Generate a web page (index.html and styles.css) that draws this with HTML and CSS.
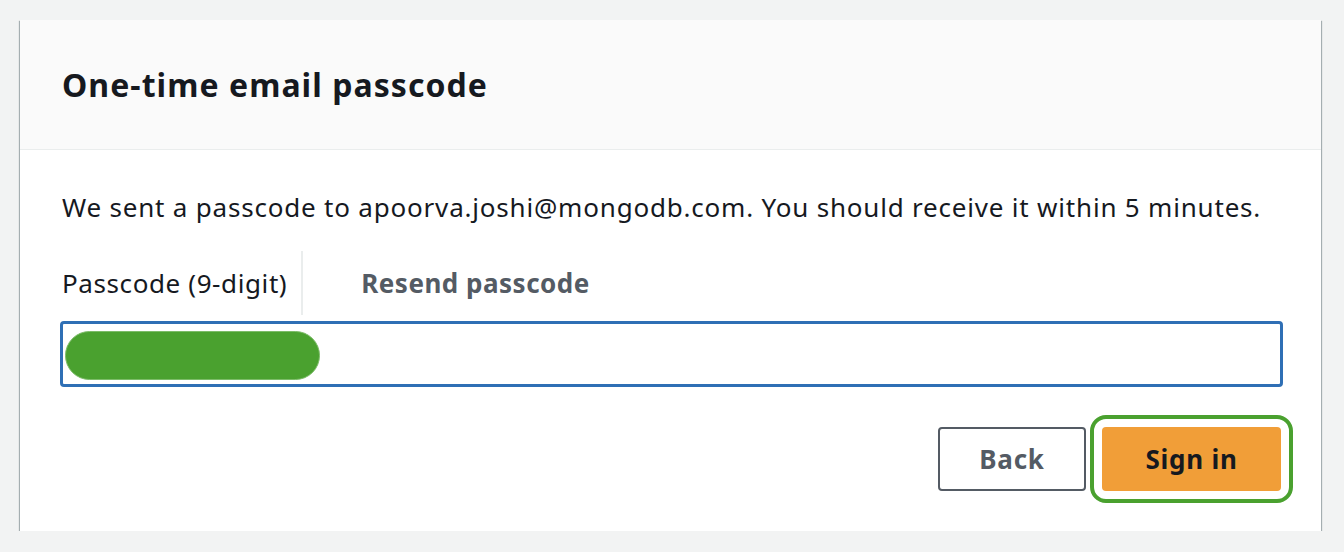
FILE: index.html
```html
<!DOCTYPE html>
<html lang="en">
<head>
<meta charset="utf-8">
<title>One-time email passcode</title>
<link rel="stylesheet" href="styles.css">
</head>
<body>
<div class="card">
  <div class="card-header">
    <h1 class="title">One-time email passcode</h1>
  </div>
  <div class="card-body">
    <p class="intro">We sent a passcode to apoorva.joshi@mongodb.com. You should receive it within 5 minutes.</p>
    <div class="label-row">
      <label class="label" for="code">Passcode (9-digit)</label>
      <span class="divider"></span>
      <a class="resend" href="#">Resend passcode</a>
    </div>
    <div class="input">
      <span class="redact"></span>
    </div>
    <div class="actions">
      <button class="btn btn-back" type="button">Back</button>
      <button class="btn btn-primary" type="button">Sign in</button>
    </div>
  </div>
</div>
</body>
</html>
```

FILE: styles.css
```css
* { box-sizing: border-box; }
html, body { margin: 0; padding: 0; }
body {
  background: #f2f3f3;
  font-family: "Noto Sans", "Open Sans", sans-serif;
  color: #16191f;
  padding: 20px 23px 0 20px;
}
.card {
  background: #ffffff;
  height: 511px;
  box-shadow: 0 1px 1px 0 rgba(0,28,36,0.5), 1px 1px 1px 0 rgba(0,28,36,0.25), -1px 1px 1px 0 rgba(0,28,36,0.25);
}
.card-header {
  background: #fafafa;
  height: 130px;
  border-bottom: 1px solid #eaeded;
  display: flex;
  align-items: center;
  padding-left: 42px;
}
.title {
  margin: 0;
  font-size: 32px;
  letter-spacing: 1.05px;
  font-weight: 700;
  line-height: 40px;
  color: #16191f;
}
.card-body {
  padding: 41px 38px 0 40px;
}
.intro {
  margin: 0 0 0 2px;
  font-size: 26px;
  letter-spacing: 0.8px;
  line-height: 32px;
}
.label-row {
  margin-top: 28px;
  height: 64px;
  display: flex;
  align-items: center;
  padding-left: 2px;
}
.label {
  font-size: 26px;
  letter-spacing: 0.6px;
  line-height: 32px;
}
.divider {
  align-self: stretch;
  width: 2px;
  background: #eaeded;
  margin-left: 14px;
  margin-right: 58px;
}
.resend {
  font-size: 26px;
  letter-spacing: 0.5px;
  font-weight: 700;
  color: #545b64;
  text-decoration: none;
}
.input {
  margin-top: 6px;
  height: 66px;
  border: 3px solid #2f6fb5;
  border-radius: 4px;
  padding: 7px 2px 4px;
  display: flex;
  align-items: stretch;
}
.redact {
  width: 255px;
  background: #4aa12f;
  border: 1px solid #7cbc68;
  border-radius: 25px;
}
.actions {
  margin-top: 40px;
  display: flex;
  justify-content: flex-end;
  gap: 16px;
  padding-right: 2px;
}
.btn {
  height: 64px;
  border-radius: 4px;
  font-family: inherit;
  font-size: 26px;
  letter-spacing: 0.75px;
  font-weight: 700;
  cursor: pointer;
}
.btn-back {
  width: 148px;
  background: #ffffff;
  border: 2px solid #545b64;
  color: #545b64;
}
.btn-primary {
  width: 179px;
  background: #f19e38;
  border: none;
  color: #16191f;
  outline: 4px solid #4aa12f;
  outline-offset: 8px;
}
```
